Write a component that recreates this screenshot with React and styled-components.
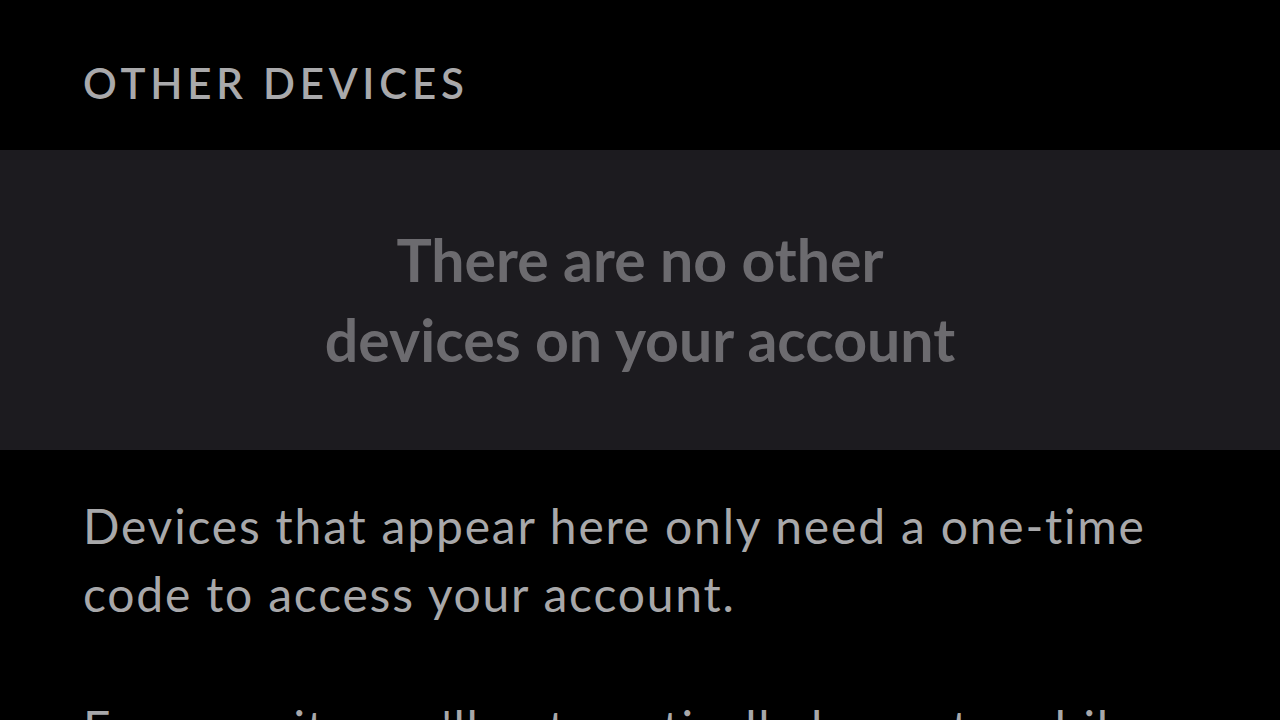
import React from 'react'
import styled, { createGlobalStyle } from 'styled-components'

const Global = createGlobalStyle`
html, body {
  margin: 0;
  padding: 0;
  background: #000;
  overflow: hidden;
}
`

const Page = styled.div`
width: 1280px;
height: 720px;
background: #000;
display: flex;
flex-direction: column;
font-family: Lato, "Open Sans", sans-serif;
overflow: hidden;
& > *{
  flex-shrink: 0;
}
`

const SectionTitle = styled.h2`
margin: 0;
box-sizing: border-box;
padding: 58px 83px 0;
height: 150px;
font-size: 42px;
line-height: normal;
font-weight: 600;
letter-spacing: 4.8px;
color: #a9a9ab;
`

const EmptyPanel = styled.div`
height: 300px;
background: #1c1b1f;
display: flex;
align-items: center;
justify-content: center;
p{
  margin: 0;
  text-align: center;
  font-size: 59px;
  font-weight: 700;
  line-height: 80px;
  color: #6c6b6f;
}
`

const Note = styled.p`
margin: 0;
padding: 0 83px;
font-size: 48px;
font-weight: 400;
letter-spacing: 1.8px;
line-height: 68px;
color: #a8a8aa;
margin-top: ${props => props.top}px;
`

export default function App() {
  return (
    <Page>
      <Global />
      <SectionTitle>OTHER DEVICES</SectionTitle>
      <EmptyPanel>
        <p>There are no other<br />devices on your account</p>
      </EmptyPanel>
      <Note top={42}>Devices that appear here only need a one-time code to access your account.</Note>
      <Note top={66}>For security, we'll automatically log out mobile devices after a period of inactivity.</Note>
    </Page>
  )
}
